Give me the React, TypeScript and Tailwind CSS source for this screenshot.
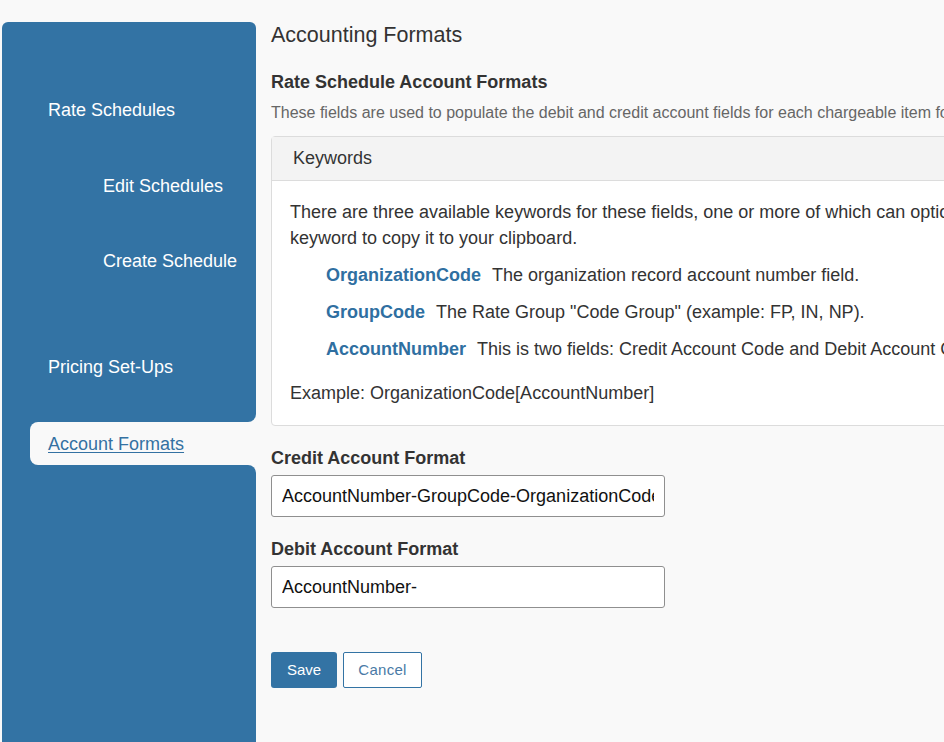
import { useState } from 'react';

const keywords = [
  { name: 'OrganizationCode', text: 'The organization record account number field.' },
  { name: 'GroupCode', text: 'The Rate Group "Code Group" (example: FP, IN, NP).' },
  { name: 'AccountNumber', text: 'This is two fields: Credit Account Code and Debit Account Code.' },
];

function Sidebar() {
  return (
    <aside className="ml-[2px] mt-[22px] flex w-[254px] flex-none flex-col text-[18px] leading-[26px] text-white">
      <div className="flex h-[400px] flex-col rounded-t-md rounded-br-lg bg-[#3373a4] pt-[75px]">
        <a className="pl-[46px]">Rate Schedules</a>
        <a className="mt-[50px] pl-[101px]">Edit Schedules</a>
        <a className="mt-[49px] pl-[101px]">Create Schedule</a>
        <a className="mt-[80px] pl-[46px]">Pricing Set-Ups</a>
      </div>
      <div className="h-[43px] bg-[#3373a4]">
        <div className="ml-[28px] flex h-full items-center rounded-l-lg bg-[#f9f9f9] pl-[18px]">
          <a className="text-[#3471a2] underline underline-offset-2">Account Formats</a>
        </div>
      </div>
      <div className="flex-1 rounded-tr-lg bg-[#3373a4]" />
    </aside>
  );
}

export default function App() {
  const [credit, setCredit] = useState('AccountNumber-GroupCode-OrganizationCode');
  const [debit, setDebit] = useState('AccountNumber-');

  return (
    <div className="flex h-[742px] overflow-hidden bg-[#f9f9f9] font-['Liberation_Sans',Arial,sans-serif] text-[#333]">
      <Sidebar />
      <main className="ml-[15px] w-[1000px] flex-none pt-[20px]">
        <h1 className="text-[21.5px] leading-[30px] text-[#333]">Accounting Formats</h1>
        <h2 className="mt-[20px] text-[18px] font-bold leading-[24px]">Rate Schedule Account Formats</h2>
        <p className="mt-[8px] whitespace-nowrap text-[16px] leading-[22px] text-[#666]">
          These fields are used to populate the debit and credit account fields for each chargeable item for this organization.
        </p>

        <section className="mt-[12px] rounded-[4px] border border-[#dcdcdc] bg-white">
          <div className="flex h-[44px] items-center border-b border-[#dcdcdc] bg-[#f3f3f3] px-[21px] text-[18px]">
            Keywords
          </div>
          <div className="px-[18px] pb-[19px] pt-[18px] text-[18px] leading-[26px]">
            <p className="whitespace-nowrap">
              There are three available keywords for these fields, one or more of which can optionally be used. Click a
              <br />
              keyword to copy it to your clipboard.
            </p>
            <ul className="mt-[11px] flex flex-col gap-[11px] pl-[36px]">
              {keywords.map((k) => (
                <li key={k.name} className="whitespace-nowrap">
                  <button className="mr-[11px] cursor-pointer font-bold text-[#2f6fa1]">{k.name}</button>
                  <span>{k.text}</span>
                </li>
              ))}
            </ul>
            <p className="mt-[18px]">Example: OrganizationCode[AccountNumber]</p>
          </div>
        </section>

        <label className="mt-[20px] block text-[18px] font-bold leading-[24px]">Credit Account Format</label>
        <input
          value={credit}
          onChange={(e) => setCredit(e.target.value)}
          className="mt-[5px] h-[42px] w-[394px] rounded-[3px] border border-[#8f8f8f] bg-white px-[10px] text-[18px] text-[#111] outline-none"
        />
        <label className="mt-[20px] block text-[18px] font-bold leading-[24px]">Debit Account Format</label>
        <input
          value={debit}
          onChange={(e) => setDebit(e.target.value)}
          className="mt-[5px] h-[42px] w-[394px] rounded-[3px] border border-[#8f8f8f] bg-white px-[10px] text-[18px] text-[#111] outline-none"
        />

        <div className="mt-[44px] flex gap-[6px]">
          <button className="h-[36px] w-[66px] rounded-[3px] bg-[#3373a4] text-[15px] text-white">Save</button>
          <button className="h-[36px] w-[79px] rounded-[2px] border border-[#3373a4] bg-white text-[15px] tracking-[0.3px] text-[#4a7aa6]">
            Cancel
          </button>
        </div>
      </main>
    </div>
  );
}
